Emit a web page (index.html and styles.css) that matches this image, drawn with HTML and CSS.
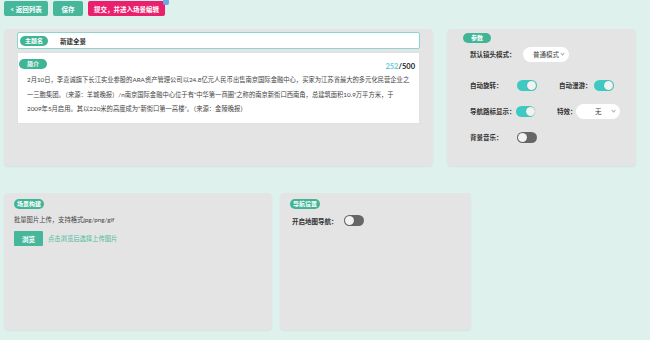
FILE: index.html
```html
<!DOCTYPE html>
<html lang="zh-CN">
<head>
  <meta charset="UTF-8">
  <title>新建全景</title>
  <link rel="stylesheet" href="styles.css">
</head>
<body>
  <div class="toolbar">
    <button class="btn btn-teal btn-back">&lt; 返回列表</button>
    <button class="btn btn-teal btn-save">保存</button>
    <button class="btn btn-pink">提交，并进入场景编辑<span class="badge"></span></button>
  </div>

  <div class="row row-top">
    <div class="panel panel-main">
      <div class="name-box">
        <span class="pill">主题名</span>
        <span class="name-value">新建全景</span>
      </div>
      <div class="intro-box">
        <div class="intro-head">
          <span class="pill">简介</span>
          <span class="counter"><span class="count-now">252</span>/500</span>
        </div>
        <p class="intro-text">2月10日，李嘉诚旗下长江实业参股的ARA资产管理公司以24.8亿元人民币出售南京国际金融中心，买家为江苏省最大的多元化民营企业之一三胞集团。（来源：羊城晚报）/n南京国际金融中心位于有“中华第一商圈”之称的南京新街口西南角，总建筑面积10.9万平方米，于<br>2009年5月启用。其以220米的高度成为“新街口第一高楼”。（来源：金陵晚报）</p>
      </div>
    </div>

    <div class="panel panel-params">
      <span class="pill">参数</span>
      <div class="param-row first">
        <span class="label label-wide">默认镜头模式：</span>
        <span class="select">普通模式<i class="caret"></i></span>
      </div>
      <div class="param-row second">
        <span class="label">自动旋转：</span>
        <span class="toggle on"></span>
        <span class="label label-second">自动漫游：</span>
        <span class="toggle on"></span>
      </div>
      <div class="param-row">
        <span class="label">导航路标显示：</span>
        <span class="toggle on"></span>
        <span class="label label-short">特效：</span>
        <span class="select select-fx">无<i class="caret"></i></span>
      </div>
      <div class="param-row">
        <span class="label">背景音乐：</span>
        <span class="toggle"></span>
      </div>
    </div>
  </div>

  <div class="row row-bottom">
    <div class="panel panel-scene">
      <span class="pill">场景构建</span>
      <p class="hint">批量图片上传，支持格式jpg/png/gif</p>
      <div class="upload">
        <button class="btn btn-teal btn-browse">浏览</button>
        <span class="upload-link">点击浏览后选择上传图片</span>
      </div>
    </div>
    <div class="panel panel-nav">
      <span class="pill">导航设置</span>
      <div class="nav-row">
        <span class="label">开启地图导航：</span>
        <span class="toggle"></span>
      </div>
    </div>
  </div>
</body>
</html>
```

FILE: styles.css
```css
body {
    margin: 0;
    background-color: #def1ec;
    font-family: "Lato", "Noto Sans CJK SC", sans-serif;
    color: #333;
    height: 340px;
    overflow: hidden;
}

/* top buttons */
.toolbar {
    display: flex;
    gap: 5px;
    padding: 1px 4px 0;
    height: 28px;
}
.btn {
    height: 15px;
    border: none;
    border-radius: 2px;
    color: #fff;
    font-family: inherit;
    font-size: 6.5px;
    font-weight: bold;
    padding: 0 6px;
    cursor: pointer;
}
.btn-teal {
    background-color: #46b79b;
}
.btn-back {
    width: 44px;
}
.btn-save {
    width: 30px;
}
.btn-pink {
    position: relative;
    background-color: #ea1f6d;
    width: 77px;
}
.badge {
    position: absolute;
    top: -2px;
    right: -4px;
    width: 6px;
    height: 6px;
    border-radius: 2px;
    background-color: #6aa8e8;
}

/* layout rows */
.row {
    display: flex;
    padding-left: 4px;
}
.row-top {
    gap: 14px;
}
.row-bottom {
    gap: 8px;
    margin-top: 27px;
}
.panel {
    background-color: #e4e4e4;
    border-radius: 4px;
    box-shadow: 0 1px 2px rgba(0, 0, 0, 0.06);
    box-sizing: border-box;
    height: 137px;
}
.panel-main {
    width: 429px;
    padding: 3px 13px 0;
}
.panel-params {
    width: 189px;
    padding: 4px 16px 0;
}
.panel-scene {
    width: 268px;
    padding: 6px 10px 0;
}
.panel-nav {
    width: 191px;
    padding: 6px 10px 0;
}

.pill {
    display: block;
    width: fit-content;
    min-width: 28px;
    height: 10px;
    line-height: 10px;
    padding: 0 3px;
    box-sizing: border-box;
    border-radius: 5px;
    background-color: #3fb596;
    color: #fff;
    font-size: 6px;
    font-weight: bold;
    text-align: center;
}

/* name + intro */
.name-box {
    display: flex;
    align-items: center;
    height: 17px;
    background-color: #fff;
    border: 1px solid #8dd5cf;
    border-radius: 2px;
    padding-left: 2px;
    box-sizing: border-box;
}
.name-value {
    margin-left: 12px;
    font-size: 6.5px;
    font-weight: bold;
}
.intro-box {
    margin-top: 3px;
    height: 72px;
    background-color: #fff;
    border: 1px solid #e0e0e0;
    box-sizing: border-box;
    padding: 6px 4px 0 1px;
}
.intro-head {
    display: flex;
    justify-content: space-between;
    align-items: flex-start;
}
.counter {
    margin-top: 3px;
    font-size: 7.5px;
    line-height: 9px;
    font-weight: bold;
    color: #222;
}
.count-now {
    color: #64c9d8;
}
.intro-text {
    margin: 2px 0 0 8px;
    font-size: 6.3px;
    line-height: 14.5px;
    color: #444;
}

/* params panel */
.param-row {
    display: flex;
    align-items: center;
    height: 16px;
    margin-top: 10px;
    padding-left: 7px;
}
.param-row.first {
    margin-top: 3px;
}
.param-row.second {
    margin-top: 15px;
}
.label {
    width: 47px;
    font-size: 6.5px;
    font-weight: bold;
    color: #333;
    white-space: nowrap;
}
.label-wide {
    width: 53px;
}
.label-second {
    width: 35px;
    margin-left: 22px;
}
.label-short {
    width: 20px;
    margin-left: 22px;
}
.select {
    position: relative;
    display: flex;
    align-items: center;
    justify-content: center;
    width: 46px;
    height: 15px;
    border-radius: 8px;
    background-color: #fff;
    font-size: 6.5px;
    color: #444;
}
.select-fx {
    width: 45px;
}
.caret {
    position: absolute;
    right: 5px;
    top: 5px;
    width: 2px;
    height: 2px;
    border-right: 1px solid #aaa;
    border-bottom: 1px solid #aaa;
    transform: rotate(45deg);
}

.toggle {
    position: relative;
    display: inline-block;
    width: 20px;
    height: 11px;
    border-radius: 6px;
    background-color: #666;
}
.toggle::after {
    content: "";
    position: absolute;
    top: 1px;
    left: 1px;
    width: 9px;
    height: 9px;
    border-radius: 50%;
    background-color: #f2f2f2;
    box-shadow: 0 0 1px rgba(0, 0, 0, 0.3);
}
.toggle.on {
    background-color: #3ecac0;
}
.toggle.on::after {
    left: 10px;
}

/* scene + nav panels */
.hint {
    margin: 6px 0 0;
    font-size: 6.3px;
    color: #444;
}
.upload {
    display: flex;
    align-items: center;
    margin-top: 7px;
}
.btn-browse {
    width: 29px;
    padding: 0;
    border-radius: 1px;
}
.upload-link {
    margin-left: 5px;
    font-size: 6.3px;
    color: #4dbb9e;
}
.nav-row {
    display: flex;
    align-items: center;
    margin-top: 6px;
    padding-left: 2px;
}
.nav-row .label {
    width: 52px;
}
```
